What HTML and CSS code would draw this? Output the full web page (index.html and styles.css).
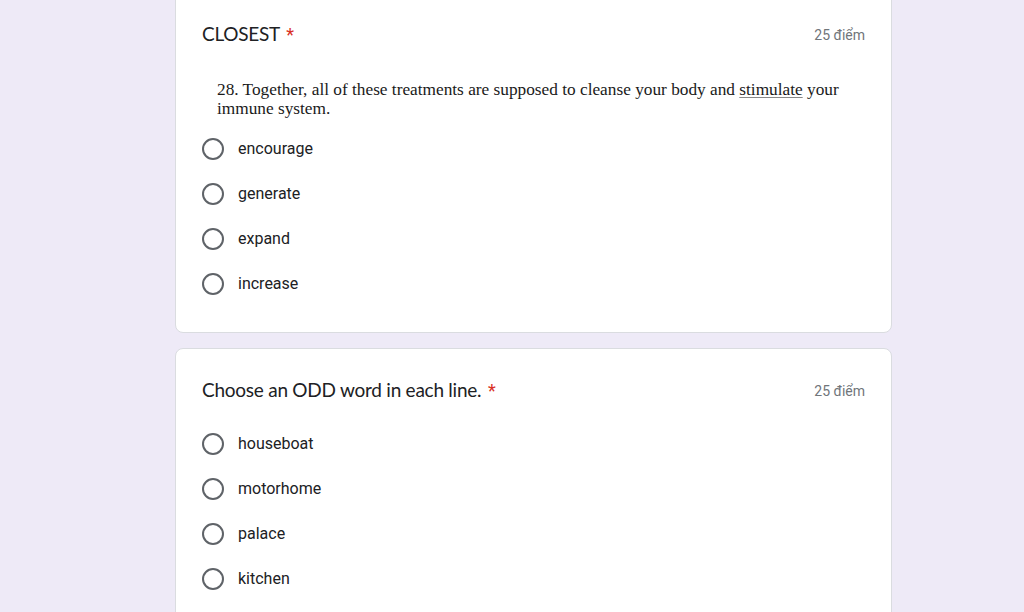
FILE: index.html
```html
<!DOCTYPE html>
<html lang="vi">
<head>
  <meta charset="UTF-8">
  <title>Biểu mẫu</title>
  <link rel="stylesheet" href="styles.css">
</head>
<body>

<div class="form">
  <div class="card first">
    <div class="q-head">
      <div class="q-title">CLOSEST <span class="req">*</span></div>
      <div class="q-points">25 điểm</div>
    </div>
    <div class="q-image">
      28. Together, all of these treatments are supposed to cleanse your body and <u>stimulate</u> your immune system.
    </div>
    <div class="options">
      <label class="opt"><span class="radio"></span>encourage</label>
      <label class="opt"><span class="radio"></span>generate</label>
      <label class="opt"><span class="radio"></span>expand</label>
      <label class="opt"><span class="radio"></span>increase</label>
    </div>
  </div>

  <div class="card">
    <div class="q-head">
      <div class="q-title">Choose an ODD word in each line. <span class="req">*</span></div>
      <div class="q-points">25 điểm</div>
    </div>
    <div class="options">
      <label class="opt"><span class="radio"></span>houseboat</label>
      <label class="opt"><span class="radio"></span>motorhome</label>
      <label class="opt"><span class="radio"></span>palace</label>
      <label class="opt"><span class="radio"></span>kitchen</label>
    </div>
  </div>
</div>

</body>
</html>
```

FILE: styles.css
```css
body { margin: 0; background: #eeeaf7; font-family: Roboto, Arial, sans-serif; color: #202124; overflow: hidden; }
.form { width: 717px; margin-left: 175px; }
.card { background: #fff; border: 1px solid #dadce0; border-radius: 8px; padding: 24px 26px 26px; margin-bottom: 15px; }
.card.first { margin-top: -8px; padding-bottom: 26px; }
.q-head { display: flex; justify-content: space-between; align-items: center; height: 32px; }
.q-title { font-family: Lato, sans-serif; font-size: 19px; letter-spacing: -0.25px; }
.req { font-family: Roboto, sans-serif; font-size: 18px; color: #d93025; margin-left: 2px; }
.q-points { font-size: 14px; color: #70757a; padding-top: 3px; }
.q-image { font-family: "Liberation Serif", serif; font-size: 17.3px; line-height: 19px; color: #1a1a1a; padding: 31px 0 0 15px; }
.q-image u { text-decoration-color: #888; text-underline-offset: 2px; }
.options { margin-top: 8px; }
.card:not(.first) .options { margin-top: 16px; }
.opt { display: flex; align-items: center; height: 45px; font-size: 16px; }
.radio { width: 18px; height: 18px; border: 2px solid #5f6368; border-radius: 50%; margin-right: 14px; }
```
